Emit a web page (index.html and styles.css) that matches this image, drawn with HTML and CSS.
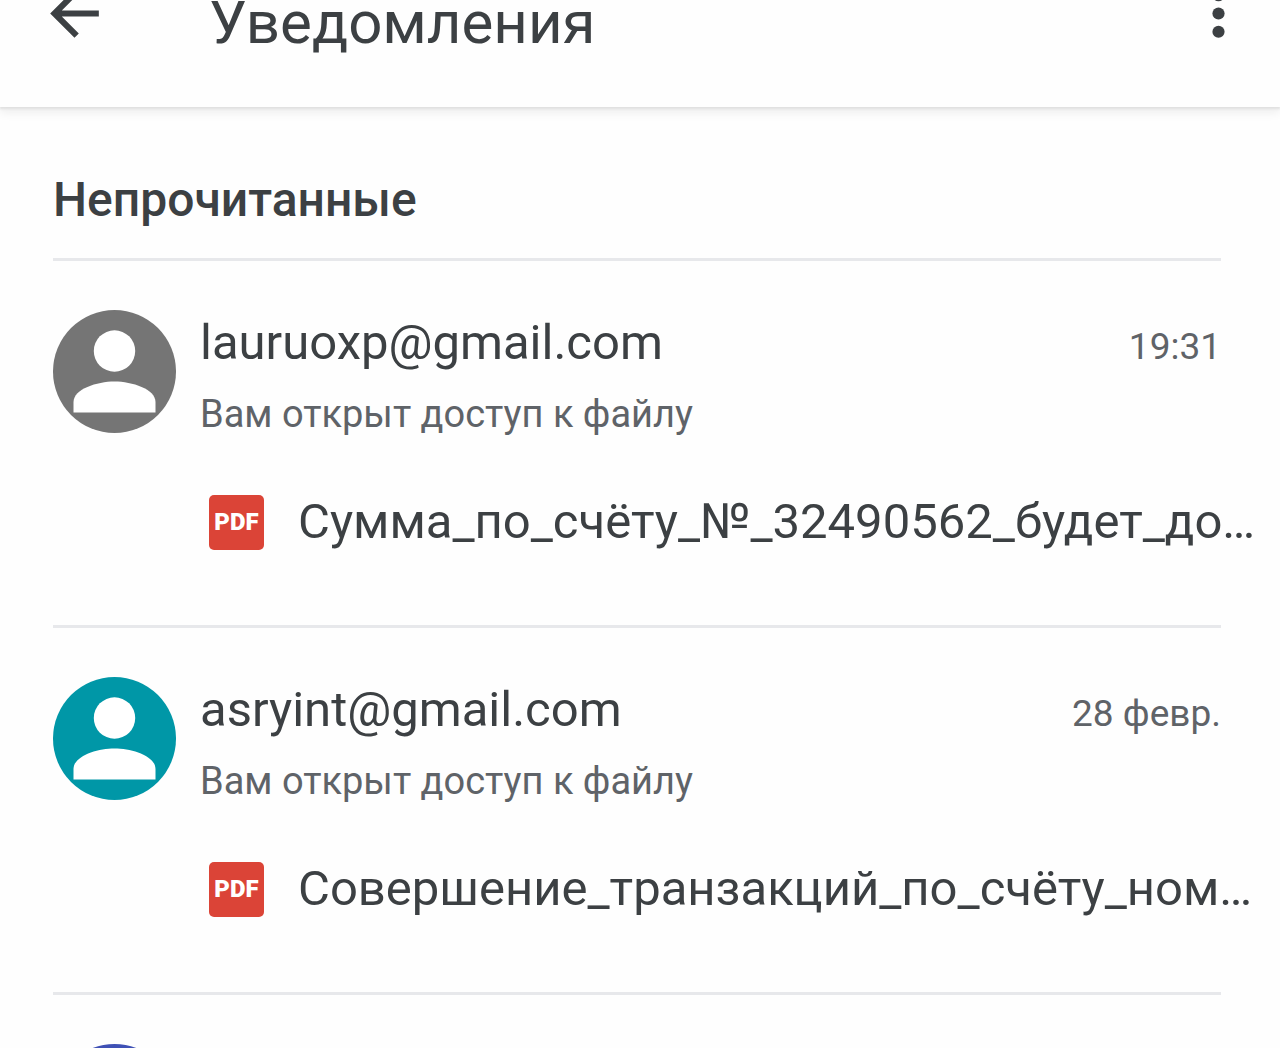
FILE: index.html
```html
<!DOCTYPE html>
<html lang="ru">
<head>
<meta charset="utf-8">
<meta name="viewport" content="width=device-width, initial-scale=1">
<title>Уведомления</title>
<link rel="stylesheet" href="styles.css">
</head>
<body>
<header class="toolbar">
  <button class="icon-button" type="button" aria-label="Назад">
    <svg class="icon" viewBox="0 0 24 24" aria-hidden="true"><path d="M20 11H7.83l5.59-5.59L12 4l-8 8 8 8 1.41-1.41L7.83 13H20v-2z"/></svg>
  </button>
  <h1 class="title">Уведомления</h1>
  <button class="icon-button" type="button" aria-label="Ещё">
    <svg class="icon" viewBox="0 0 24 24" aria-hidden="true"><circle cx="12" cy="6" r="2"/><circle cx="12" cy="12" r="2"/><circle cx="12" cy="18" r="2"/></svg>
  </button>
</header>
<main class="content">
  <h2 class="section">Непрочитанные</h2>
  <ul class="list">
    <li class="item">
      <svg class="avatar avatar-gray" viewBox="0 0 123 123" aria-hidden="true"><circle cx="61.5" cy="61.5" r="61.5"/><g fill="#fff"><circle cx="61.5" cy="41" r="20.7"/><path d="M20.5 102.5V92C20.5 79 44 71.5 61.5 71.5S102.5 79 102.5 92V102.5Z"/></g></svg>
      <div class="body">
        <div class="top"><span class="sender">lauruoxp@gmail.com</span><time class="time">19:31</time></div>
        <p class="action">Вам открыт доступ к файлу</p>
        <a class="file" href="#"><span class="pdf">PDF</span><span class="name">Сумма_по_счёту_№_32490562_будет_до…</span></a>
      </div>
    </li>
    <li class="item">
      <svg class="avatar avatar-teal" viewBox="0 0 123 123" aria-hidden="true"><circle cx="61.5" cy="61.5" r="61.5"/><g fill="#fff"><circle cx="61.5" cy="41" r="20.7"/><path d="M20.5 102.5V92C20.5 79 44 71.5 61.5 71.5S102.5 79 102.5 92V102.5Z"/></g></svg>
      <div class="body">
        <div class="top"><span class="sender">asryint@gmail.com</span><time class="time">28 февр.</time></div>
        <p class="action">Вам открыт доступ к файлу</p>
        <a class="file" href="#"><span class="pdf">PDF</span><span class="name">Совершение_транзакций_по_счёту_ном…</span></a>
      </div>
    </li>
    <li class="item">
      <svg class="avatar avatar-indigo" viewBox="0 0 123 123" aria-hidden="true"><circle cx="61.5" cy="61.5" r="61.5"/></svg>
    </li>
  </ul>
</main>
</body>
</html>
```
FILE: styles.css
```css
* { box-sizing: border-box; }

body {
  margin: 0;
  height: 100vh;
  overflow: hidden;
  background: #fefefe;
  color: #3c4043;
  font-family: Roboto, sans-serif;
}

h1, h2, p, ul { margin: 0; padding: 0; }

/* The toolbar is partly scrolled off the top of the window. */
.toolbar {
  display: flex;
  align-items: center;
  height: 187px;
  margin-top: -80px;
  padding: 0 25px 0 38px;
  box-shadow: 0 2px 2px #e0e0e0, 0 5px 10px #ececec;
}

.icon-button {
  padding: 0;
  border: 0;
  background: none;
  color: inherit;
  line-height: 0;
}

.icon { width: 73px; height: 73px; fill: currentColor; }

.title {
  flex: 1;
  margin: 18px 0 0 98px;
  font-size: 60px;
  line-height: 72px;
  font-weight: 400;
}

.content { padding: 64px 59px 0 53px; }

.section {
  padding-bottom: 30px;
  font-size: 48px;
  line-height: 57px;
  font-weight: 500;
}

.list { list-style: none; }

.item {
  display: flex;
  gap: 24px;
  min-height: 367px;
  padding-top: 49px;
  border-top: 3px solid #e7e8eb;
}

.avatar { flex: none; width: 123px; height: 123px; }
.avatar-gray { fill: #757575; }
.avatar-teal { fill: #0097a7; }
.avatar-indigo { fill: #3f51b5; }

.body { flex: 1; min-width: 0; }

.top {
  display: flex;
  justify-content: space-between;
  align-items: baseline;
}

.sender, .name { font-size: 49px; line-height: 66px; }

.time, .action { color: #5f6368; line-height: 46px; }

.time { font-size: 37px; }

.action { padding-top: 15px; font-size: 38px; }

.file {
  display: flex;
  align-items: center;
  gap: 34px;
  margin: 52px -59px 0 9px;
  color: inherit;
  text-decoration: none;
  white-space: nowrap;
}

.pdf {
  flex: none;
  width: 55px;
  border-radius: 5px;
  background: #db4437;
  color: #fff;
  font-size: 24px;
  line-height: 55px;
  font-weight: 900;
  text-align: center;
}
```
